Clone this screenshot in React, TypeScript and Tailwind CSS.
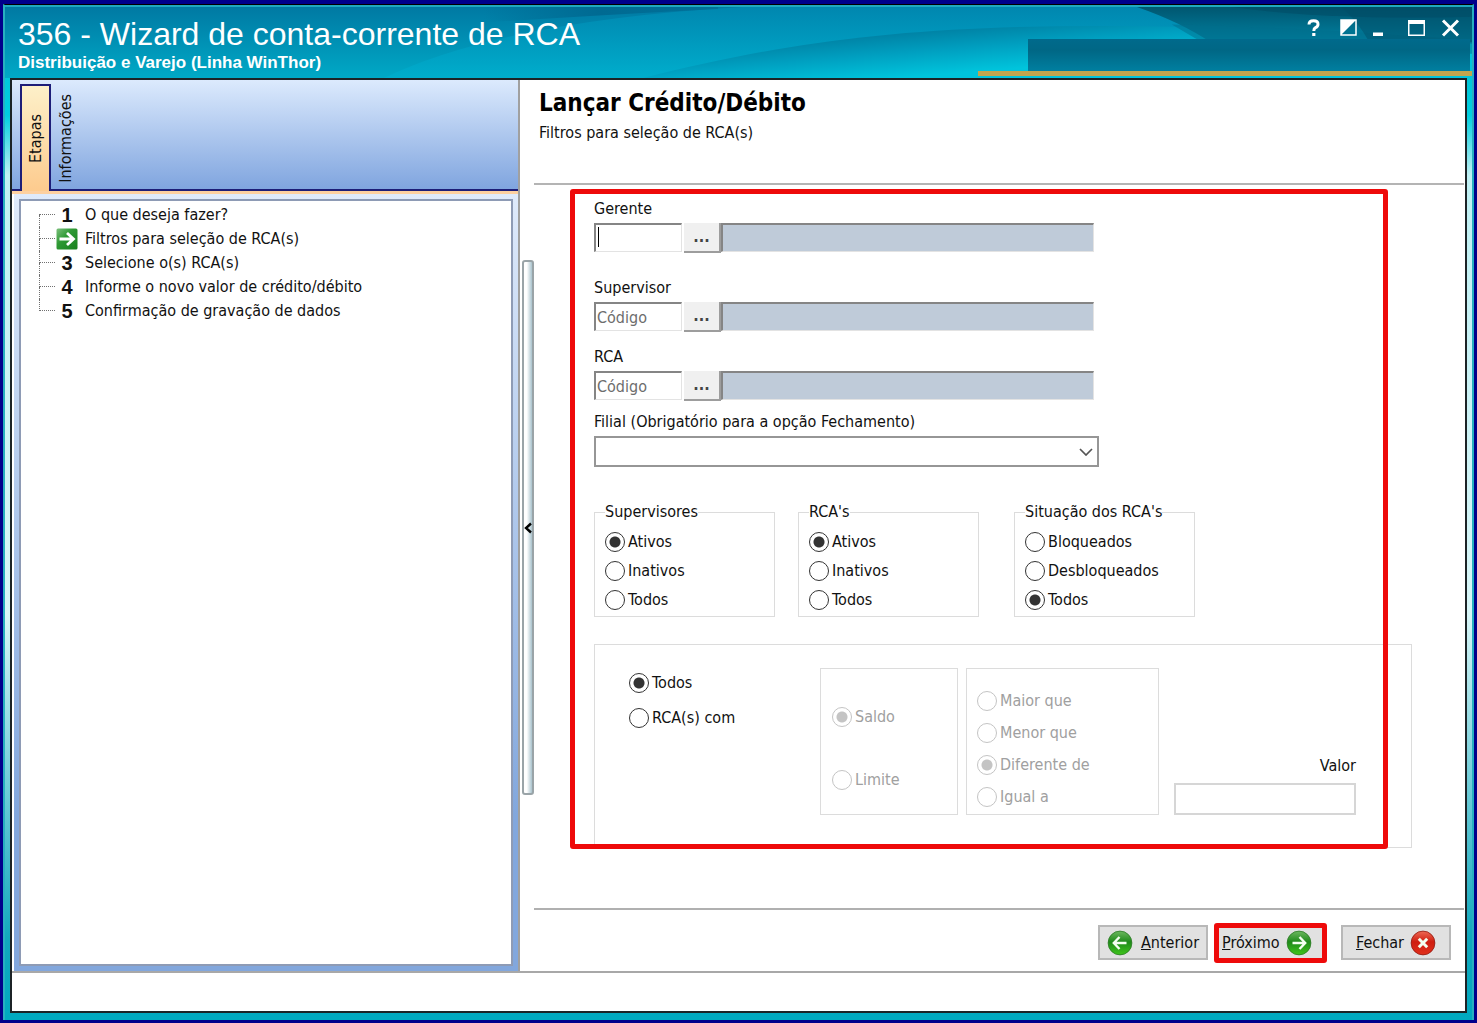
import React, { useState } from 'react';

const steps = [
  'O que deseja fazer?',
  'Filtros para seleção de RCA(s)',
  'Selecione o(s) RCA(s)',
  'Informe o novo valor de crédito/débito',
  'Confirmação de gravação de dados',
];

const HeaderArt: React.FC = () => (
  <svg
    className="absolute inset-0 h-full w-full"
    viewBox="0 0 1471 73"
    preserveAspectRatio="none"
    aria-hidden="true"
  >
    <defs>
      <linearGradient id="sky" x1="0" y1="0" x2="0" y2="1">
        <stop offset="0" stopColor="#0079a3" />
        <stop offset="1" stopColor="#00a9c6" />
      </linearGradient>
      <linearGradient id="band" x1="0" y1="0" x2="0" y2="1">
        <stop offset="0" stopColor="#0090b8" />
        <stop offset="1" stopColor="#00b0d0" />
      </linearGradient>
      <linearGradient id="wave" gradientUnits="userSpaceOnUse" x1="850" y1="26" x2="854" y2="76">
        <stop offset="0" stopColor="#007c9f" />
        <stop offset="0.5" stopColor="#009fc0" />
        <stop offset="1" stopColor="#00c4dc" />
      </linearGradient>
      <linearGradient id="deep" x1="0" y1="0" x2="0" y2="1">
        <stop offset="0" stopColor="#005670" />
        <stop offset="1" stopColor="#0083a3" />
      </linearGradient>
      <linearGradient id="shade" x1="0" y1="0" x2="1" y2="0">
        <stop offset="0" stopColor="#006a92" stopOpacity="0" />
        <stop offset="0.5" stopColor="#006a92" />
        <stop offset="1" stopColor="#006a92" stopOpacity="0.6" />
      </linearGradient>
    </defs>
    <rect width="1471" height="73" fill="url(#sky)" />
    <path d="M380 73 Q500 14 740 0 H1471 V73 Z" fill="url(#band)" opacity="0.6" />
    <path d="M480 16 Q600 8 715 2 L715 0 H480 Z" fill="url(#shade)" />
    <path d="M640 73 C760 42 860 26 1000 21 Q1220 14 1471 38 V73 Z" fill="url(#wave)" />
    <path d="M1135 0 Q1180 16 1210 37 H1471 V0 Z" fill="url(#deep)" />
    <path d="M1170 18 Q1280 20 1471 34 V48 H1220 Z" fill="#006d8c" opacity="0.5" />
    <path d="M1340 0 Q1356 14 1368 36 H1471 V0 Z" fill="#00506a" opacity="0.5" />
    <path d="M1230 0 Q1330 14 1471 10 V0 Z" fill="#004a64" opacity="0.5" />
  </svg>
);

const WindowButtons: React.FC = () => (
  <div className="flex items-center gap-[14px] text-white">
    <button type="button" aria-label="Ajuda" className="h-5 w-5">
      <svg viewBox="0 0 20 20" className="h-5 w-5" fill="none" stroke="currentColor" strokeWidth="3">
        <path d="M5 6.5Q5 2.8 9.6 2.8Q14 2.8 14 6.2Q14 8.5 11.5 9.7Q9.8 10.6 9.8 13" />
        <path d="M8.2 16.5H11.4" />
      </svg>
    </button>
    <button type="button" aria-label="Alternar" className="h-5 w-5">
      <svg viewBox="0 0 20 20" className="h-5 w-5">
        <rect x="3" y="2" width="15" height="15" fill="none" stroke="currentColor" strokeWidth="1.5" />
        <path d="M3 2H18L3 17Z" fill="currentColor" />
      </svg>
    </button>
    <button type="button" aria-label="Minimizar" className="h-5 w-5">
      <svg viewBox="0 0 20 20" className="h-5 w-5">
        <rect x="1" y="14.5" width="10" height="3.5" fill="currentColor" />
      </svg>
    </button>
    <button type="button" aria-label="Maximizar" className="h-5 w-5">
      <svg viewBox="0 0 20 20" className="h-5 w-5">
        <path d="M2 2H19V18H2Z M3.5 6V16.5H17.5V6Z" fill="currentColor" fillRule="evenodd" />
      </svg>
    </button>
    <button type="button" aria-label="Fechar janela" className="h-5 w-5">
      <svg viewBox="0 0 20 20" className="h-5 w-5" stroke="currentColor" strokeWidth="3">
        <path d="M3 2.5L18 17.5M18 2.5L3 17.5" />
      </svg>
    </button>
  </div>
);

interface RoundIconProps {
  kind: 'left' | 'right' | 'close';
}

const RoundIcon: React.FC<RoundIconProps> = ({ kind }) => {
  const close = kind === 'close';
  return (
    <svg viewBox="0 0 26 26" className="h-[26px] w-[26px] shrink-0" aria-hidden="true">
      <defs>
        <linearGradient id={`fill-${kind}`} x1="0" y1="0" x2="0" y2="1">
          <stop offset="0" stopColor={close ? '#ee6a55' : '#6db860'} />
          <stop offset="0.45" stopColor={close ? '#cf1e10' : '#1f8a1a'} />
          <stop offset="1" stopColor={close ? '#e0301c' : '#3fc51c'} />
        </linearGradient>
      </defs>
      <circle
        cx="13"
        cy="13"
        r="11.9"
        fill={`url(#fill-${kind})`}
        stroke={close ? '#8e1a12' : '#2c7a26'}
        strokeWidth="0.8"
      />
      <g fill="none" stroke="#f4fff0" strokeWidth="2.4">
        {kind === 'left' && <path d="M19.5 13H7.5M12.5 7L6.8 13L12.5 19" />}
        {kind === 'right' && <path d="M6.5 13H18.5M13.5 7L19.2 13L13.5 19" />}
        {close && <path d="M8.8 8.8L17.2 17.2M17.2 8.8L8.8 17.2" strokeWidth="3" />}
      </g>
    </svg>
  );
};

const StepTree: React.FC = () => (
  <ol className="px-[18px] pt-[2px]">
    {steps.map((step, index) => (
      <li key={step} className="flex h-6 items-center">
        <span className="flex h-6 w-4 shrink-0 flex-col" aria-hidden="true">
          <span
            className={`h-3 w-full border-b border-dotted border-[#707070] ${
              index > 0 ? 'border-l' : ''
            }`}
          />
          <span
            className={`h-3 w-full border-dotted border-[#707070] ${
              index < steps.length - 1 ? 'border-l' : ''
            }`}
          />
        </span>
        {index === 1 ? (
          <svg viewBox="0 0 22 22" className="mx-px h-[22px] w-[22px] shrink-0" aria-hidden="true">
            <defs>
              <linearGradient id="step" x1="0" y1="0" x2="1" y2="1">
                <stop offset="0" stopColor="#7cc07c" />
                <stop offset="0.4" stopColor="#2f9a35" />
                <stop offset="1" stopColor="#17801c" />
              </linearGradient>
            </defs>
            <rect x="0.5" y="0.5" width="21" height="21" rx="1.5" fill="url(#step)" />
            <path d="M3.5 11H17M11 5L17.5 11L11 17" fill="none" stroke="#fff" strokeWidth="2.8" />
          </svg>
        ) : (
          <span className="w-6 text-center font-['Liberation_Sans'] text-[20px] leading-6 font-bold">
            {index + 1}
          </span>
        )}
        <span className="ml-[6px] whitespace-nowrap">{step}</span>
      </li>
    ))}
  </ol>
);

interface LookupProps {
  id: string;
  label: string;
  placeholder?: string;
  focused?: boolean;
}

const sunken =
  'border-t-[2px] border-l-[2px] border-r border-b border-t-[#858585] border-l-[#858585] border-r-[#e3e3e3] border-b-[#e3e3e3]';

const Lookup: React.FC<LookupProps> = ({ id, label, placeholder, focused }) => (
  <div className="flex flex-col gap-1">
    <label htmlFor={id} className="self-start">{label}</label>
    <div className="flex w-[500px] items-start">
      <div className="relative mr-[2px]">
        <input
          id={id}
          placeholder={placeholder}
          className={`block h-[29px] w-[88px] bg-white pl-px text-[#606060] outline-none placeholder:text-[#6d6d6d] ${sunken}`}
        />
        {focused && <span className="absolute top-1 left-1 h-5 w-px bg-black" />}
      </div>
      <button
        type="button"
        aria-label={`Pesquisar ${label}`}
        className="h-[30px] w-[37px] border-r-[2px] border-b-[2px] border-[#9d9d9d] bg-[#f0f0f0] font-bold text-[#444]"
      >
        ...
      </button>
      <input
        readOnly
        aria-label={`Nome ${label}`}
        className={`block h-[29px] min-w-0 flex-1 bg-[#bfcbd9] outline-none ${sunken}`}
      />
    </div>
  </div>
);

interface RadioListProps {
  name: string;
  options: string[];
  initial: string;
  disabled?: boolean;
  className?: string;
}

const RadioList: React.FC<RadioListProps> = ({ name, options, initial, disabled, className }) => {
  const [value, setValue] = useState(initial);

  return (
    <div className={`flex flex-col items-start ${className ?? ''}`}>
      {options.map((option) => (
        <label
          key={option}
          className={`flex items-center gap-[3px] whitespace-nowrap ${disabled ? 'text-[#a0a0a0]' : ''}`}
        >
          <input
            type="radio"
            name={name}
            checked={value === option}
            disabled={disabled}
            onChange={() => setValue(option)}
            className="h-5 w-5 appearance-none rounded-full border border-[#333] bg-white checked:bg-[radial-gradient(circle,#333_0_5px,#fff_6px)] disabled:border-[#c4c4c4] disabled:checked:bg-[radial-gradient(circle,#c4c4c4_0_5px,#fff_6px)]"
          />
          {option}
        </label>
      ))}
    </div>
  );
};

interface FilterGroupProps {
  legend: string;
  name: string;
  options: string[];
  initial: string;
}

const FilterGroup: React.FC<FilterGroupProps> = ({ legend, name, options, initial }) => (
  <fieldset className="h-[115px] w-[181px] border border-[#dcdcdc] px-[10px]">
    <legend>{legend}</legend>
    <RadioList name={name} options={options} initial={initial} className="gap-[9px] pt-[10px]" />
  </fieldset>
);

const FilterForm: React.FC = () => (
  <form className="relative mt-1 mr-[76px] ml-[36px] pt-[10px] pb-px pl-6">
    <Lookup id="gerente" label="Gerente" focused />
    <div className="mt-[25px]">
      <Lookup id="supervisor" label="Supervisor" placeholder="Código" />
    </div>
    <div className="mt-[15px]">
      <Lookup id="rca" label="RCA" placeholder="Código" />
    </div>

    <div className="mt-[11px] flex flex-col gap-1">
      <label htmlFor="filial" className="self-start">Filial (Obrigatório para a opção Fechamento)</label>
      <div className="relative w-[505px]">
        <select
          id="filial"
          defaultValue=""
          className="block h-[31px] w-full appearance-none border-2 border-[#969696] bg-white px-2 outline-none"
        >
          <option value="" />
        </select>
        <svg
          viewBox="0 0 14 8"
          className="pointer-events-none absolute top-3 right-[6px] h-2 w-[14px]"
          fill="none"
          stroke="#555"
          strokeWidth="1.7"
          aria-hidden="true"
        >
          <path d="M1 1L7 7L13 1" />
        </svg>
      </div>
    </div>

    <div className="mt-[35px] flex">
      <FilterGroup
        legend="Supervisores"
        name="supervisores"
        options={['Ativos', 'Inativos', 'Todos']}
        initial="Ativos"
      />
      <div className="mr-[35px] ml-[23px]">
        <FilterGroup legend="RCA's" name="rcas" options={['Ativos', 'Inativos', 'Todos']} initial="Ativos" />
      </div>
      <FilterGroup
        legend="Situação dos RCA's"
        name="situacao"
        options={['Bloqueados', 'Desbloqueados', 'Todos']}
        initial="Todos"
      />
    </div>

    <div className="mt-[27px] -mr-6 flex h-[204px] items-start border border-[#dcdcdc] pt-[23px] pl-[34px]">
      <RadioList
        name="escopo"
        options={['Todos', 'RCA(s) com']}
        initial="Todos"
        className="w-[191px] gap-[15px] pt-[5px]"
      />
      <div className="mr-2 h-[147px] w-[138px] border border-[#dcdcdc] pl-[11px]">
        <RadioList
          name="base"
          options={['Saldo', 'Limite']}
          initial="Saldo"
          disabled
          className="gap-[43px] pt-[38px]"
        />
      </div>
      <div className="h-[147px] w-[193px] border border-[#dcdcdc] pl-[10px]">
        <RadioList
          name="comparacao"
          options={['Maior que', 'Menor que', 'Diferente de', 'Igual a']}
          initial="Diferente de"
          disabled
          className="gap-3 pt-[22px]"
        />
      </div>
      <div className="ml-[15px] flex h-[147px] flex-col items-end justify-end gap-[7px]">
        <label htmlFor="valor">Valor</label>
        <input
          id="valor"
          className="block h-8 w-[182px] border-2 border-[#d6d6d6] bg-white px-1 text-right outline-none"
        />
      </div>
    </div>

    <div className="pointer-events-none absolute inset-0 rounded-[3px] border-[5px] border-[#ee0a0a]" />
  </form>
);

const buttonStyle =
  'flex h-[35px] items-center justify-center border-2 border-[#b8b8b8] bg-[#e1e1e1] w-[110px]';

export default function App() {
  return (
    <div className="flex min-h-screen flex-col bg-[#00008b] px-[3px] pt-1 pb-[3px] font-['DejaVu_Sans_Condensed','DejaVu_Sans',sans-serif] text-[16px] leading-5 text-[#111]">
      <div className="flex flex-1 flex-col border-x-2 border-t border-x-[#27b0c0] border-t-black bg-[linear-gradient(180deg,#00b4cc_0,#00cfe0_110px,#bff0f4_170px,#d8f6f8_60%,#12a8bd_92%,#00a9c0_100%)]">
        <header className="relative flex h-[73px] shrink-0 justify-between border-t-2 border-[#1fa9c0]">
          <HeaderArt />
          <div className="relative pt-[9px] pl-[13px] font-['Liberation_Sans',sans-serif] text-white">
            <h1 className="text-[32px] leading-9">356 - Wizard de conta-corrente de RCA</h1>
            <p className="mt-px text-[17px] leading-5 font-bold">Distribuição e Varejo (Linha WinThor)</p>
          </div>
          <div className="relative flex w-[494px] flex-col items-end">
            <div className="flex h-8 items-center pt-[10px] pr-[12px]">
              <WindowButtons />
            </div>
            <div className="mr-[2px] h-8 w-[442px] bg-[linear-gradient(180deg,#006a8c,#006785_35%,#007fa0)]" />
            <div className="h-[5px] w-full bg-[#c2a54e]" />
          </div>
        </header>

        <div className="mx-[5px] mb-[7px] flex flex-1 flex-col border-2 border-[#1c2326] bg-white">
          <main className="flex flex-1">
            <aside className="flex w-[508px] shrink-0 flex-col border-r-2 border-[#a0a0a0]">
              <div
                role="tablist"
                className="flex h-[111px] shrink-0 items-end border-b-2 border-[#1d1d78] bg-[linear-gradient(180deg,#dceafd,#80a5df)] pl-2"
              >
                <button
                  type="button"
                  role="tab"
                  aria-selected="true"
                  className="-mb-[2px] flex h-[107px] w-[31px] items-center justify-center border-x-2 border-t-2 border-[#1d1d78] bg-[linear-gradient(180deg,#fdf0c9,#fdcb8e)]"
                >
                  <span className="rotate-180 [writing-mode:vertical-rl]">Etapas</span>
                </button>
                <button
                  type="button"
                  role="tab"
                  aria-selected="false"
                  className="flex h-[101px] w-[30px] items-center justify-center"
                >
                  <span className="rotate-180 [writing-mode:vertical-rl]">Informações</span>
                </button>
              </div>
              <div className="h-[3px] bg-[#fdd0a0]" />
              <div className="ml-[2px] flex flex-1 bg-[linear-gradient(180deg,#dfeafb,#82a7dd_80%)] px-[5px] pt-[5px] pb-[5px]">
                <nav className="flex-1 border-2 border-[#8e9bb5] bg-white">
                  <StepTree />
                </nav>
              </div>
            </aside>

            <div className="flex w-[14px] shrink-0 items-center pt-1 pl-[2px]">
              <button
                type="button"
                aria-label="Recolher painel"
                className="flex h-[535px] w-3 items-center justify-center rounded-[3px] border-2 border-[#9aa4a8] bg-[linear-gradient(90deg,#fff_35%,#a9c3cd)]"
              >
                <svg viewBox="0 0 8 12" className="h-3 w-2 shrink-0" fill="none" stroke="#000" strokeWidth="2.4">
                  <path d="M7 1.5L2 6L7 10.5" />
                </svg>
              </button>
            </div>

            <section className="flex min-w-0 flex-1 flex-col pr-px">
              <div className="h-[105px] shrink-0 border-b-2 border-[#b4b4b4] pt-[9px] pl-[5px]">
                <h2 className="text-[24px] leading-7 font-bold text-black">Lançar Crédito/Débito</h2>
                <p className="mt-[6px]">Filtros para seleção de RCA(s)</p>
              </div>
              <FilterForm />
              <div className="mt-auto flex h-[63px] items-center justify-end border-t-2 border-[#b0b0b0] pt-1 pr-[13px]">
                <button type="button" className={buttonStyle}>
                  <RoundIcon kind="left" />
                  <span className="ml-2"><u>A</u>nterior</span>
                </button>
                <div className="mr-[14px] ml-[6px] rounded-[3px] border-[5px] border-[#ee0a0a]">
                  <button type="button" className="flex h-[30px] w-[103px] items-center pl-[3px] bg-[#e1e1e1]">
                    <span className="mr-[6px]"><u>P</u>róximo</span>
                    <RoundIcon kind="right" />
                  </button>
                </div>
                <button type="button" className={buttonStyle}>
                  <span className="mr-[6px]"><u>F</u>echar</span>
                  <RoundIcon kind="close" />
                </button>
              </div>
            </section>
          </main>
          <footer className="h-10 shrink-0 border-t-2 border-[#a8a8a8]" />
        </div>
      </div>
    </div>
  );
}
